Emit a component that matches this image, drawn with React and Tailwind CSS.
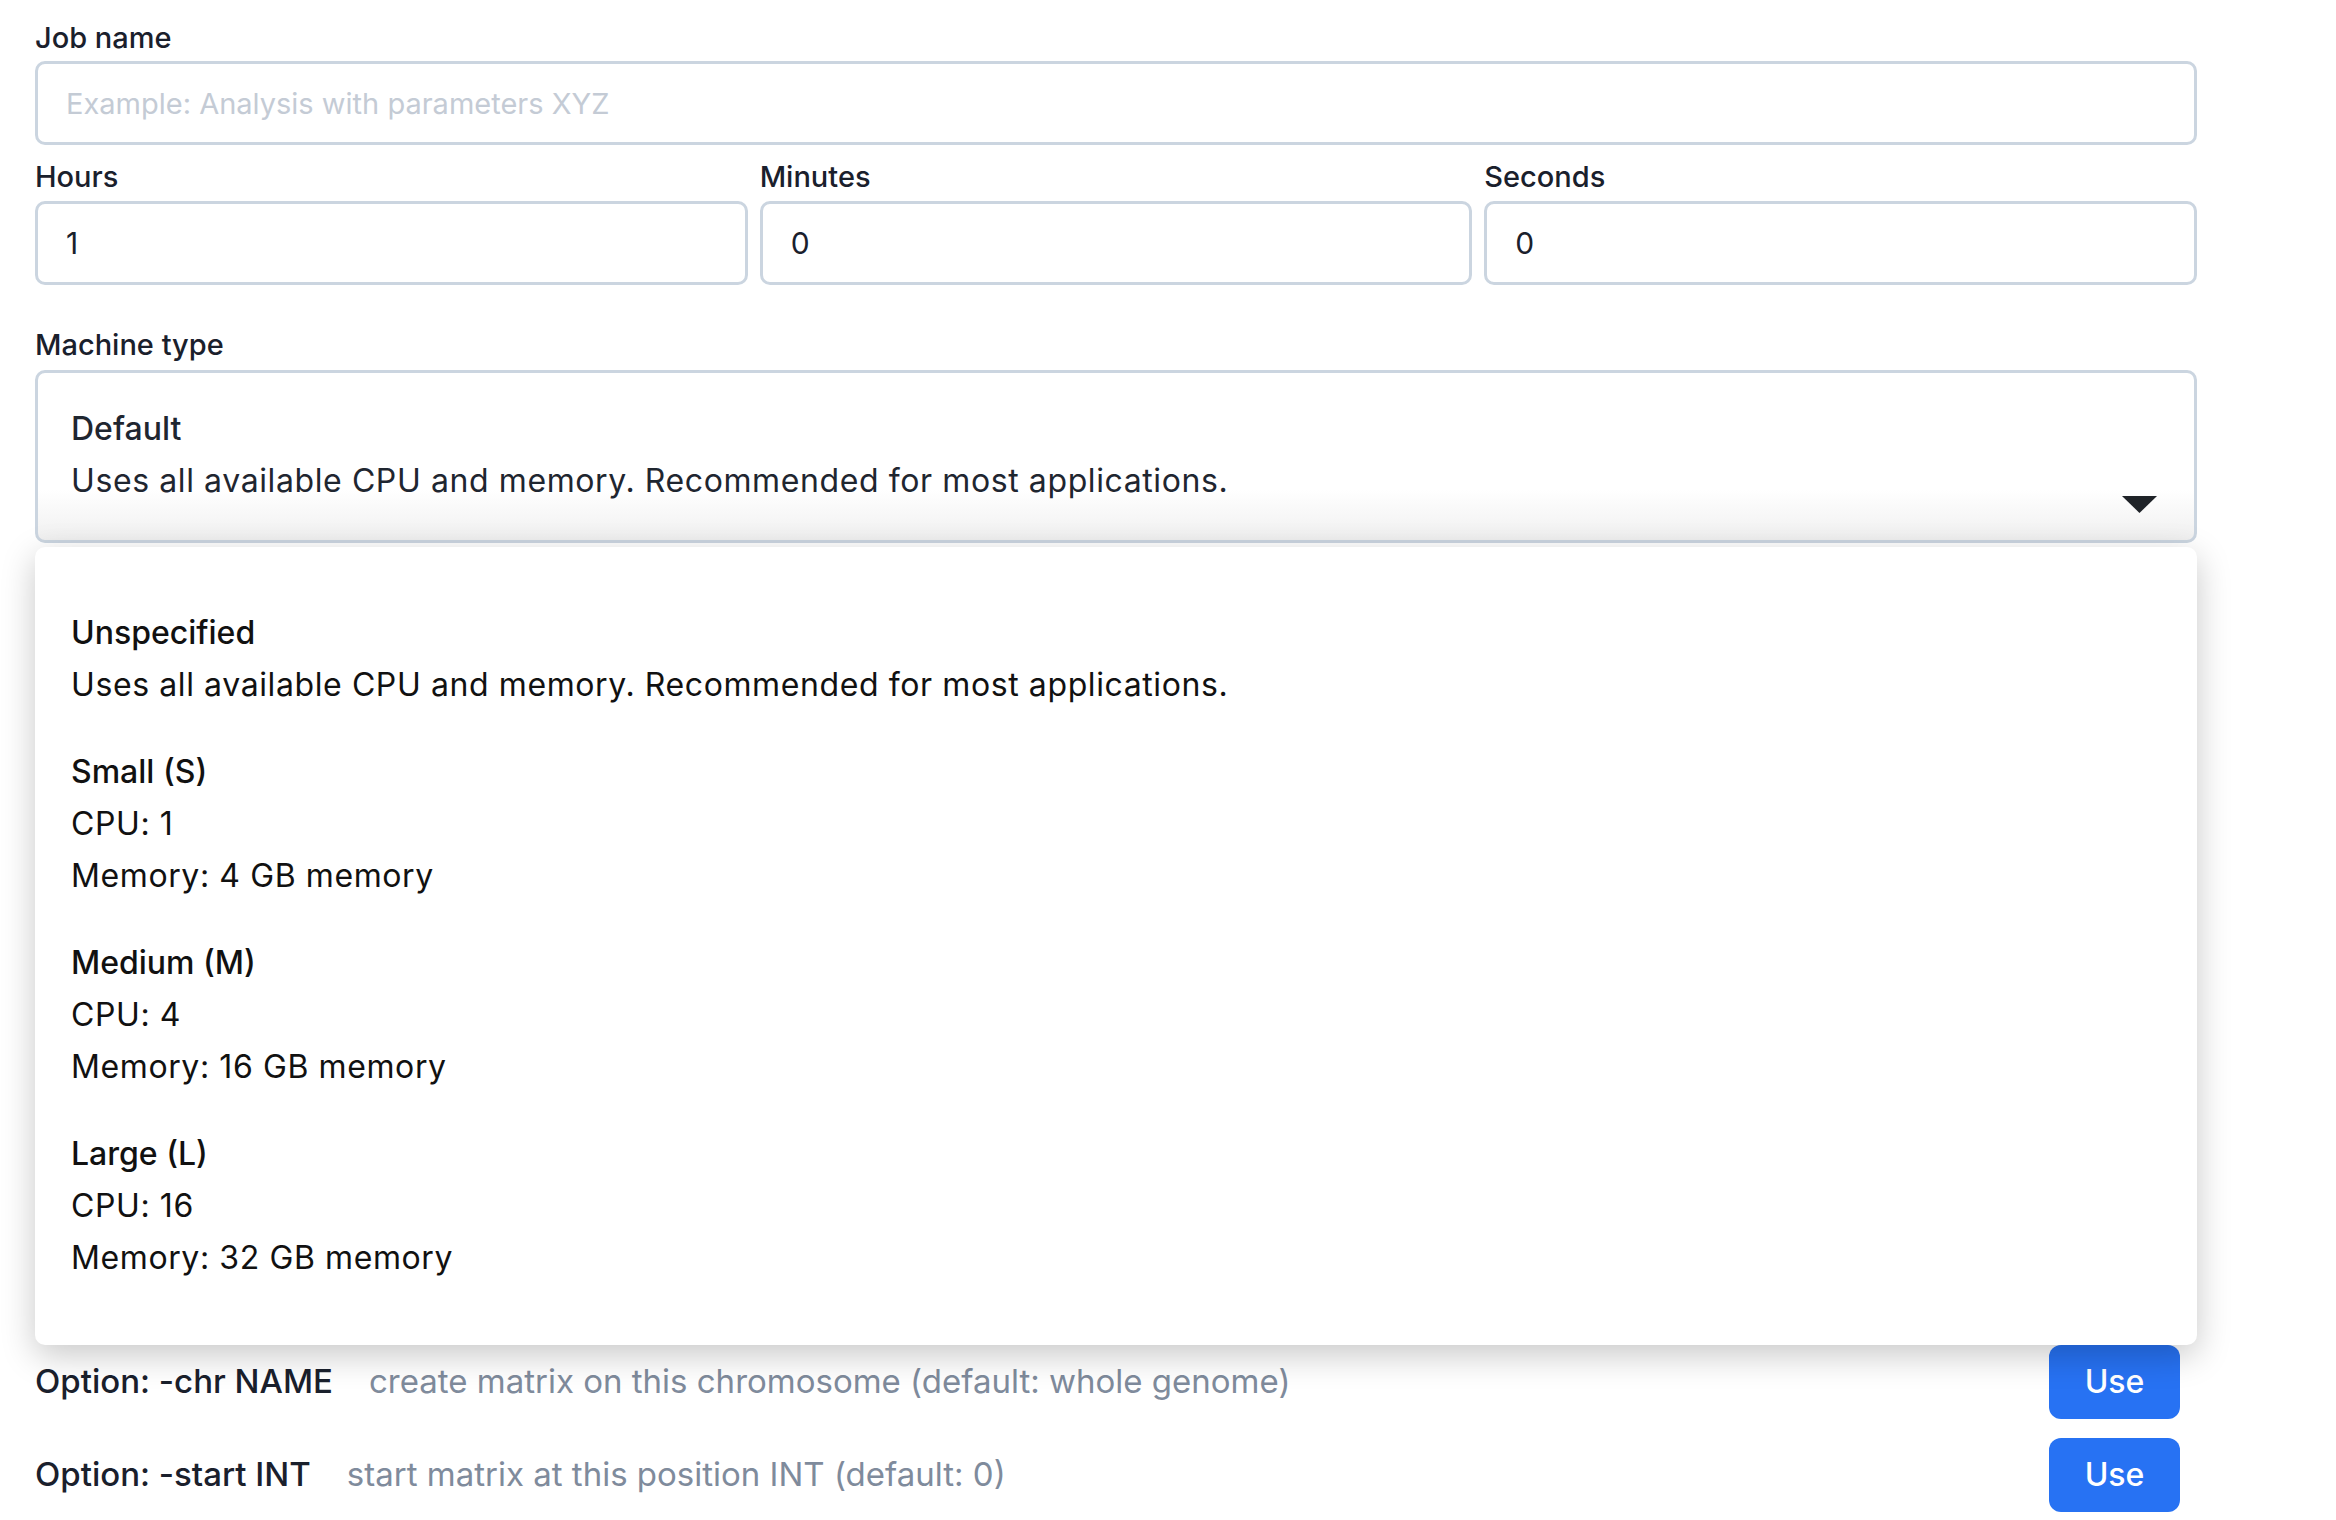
import { useState } from "react";

// Machine sizes shown in the open dropdown
const MACHINE_TYPES = [
    {
        name: "Unspecified",
        lines: ["Uses all available CPU and memory. Recommended for most applications."],
    },
    { name: "Small (S)", lines: ["CPU: 1", "Memory: 4 GB memory"] },
    { name: "Medium (M)", lines: ["CPU: 4", "Memory: 16 GB memory"] },
    { name: "Large (L)", lines: ["CPU: 16", "Memory: 32 GB memory"] },
];

const OPTIONS = [
    { flag: "Option: -chr NAME", help: "create matrix on this chromosome (default: whole genome)" },
    { flag: "Option: -start INT", help: "start matrix at this position INT (default: 0)" },
];

function Label({ children, className = "" }) {
    return (
        <label className={`block text-[29px] leading-[40px] font-medium text-[#1a202c] ${className}`}>
            {children}
        </label>
    );
}

function TextInput({ value, placeholder }) {
    return (
        <input
            defaultValue={value}
            placeholder={placeholder}
            className="w-full h-[84px] border-[3px] border-[#cbd5e0] rounded-[10px] pl-[28px] text-[30px] text-[#1a202c] placeholder:text-[29px] placeholder:text-[#c4cbd5] focus:outline-none"
        />
    );
}

export default function App() {
    const [open] = useState(true);

    return (
        <div className="min-h-screen bg-white px-[35px] pt-[18px] font-['Inter',sans-serif]" style={{ width: 2336 }}>
            <div className="w-[2162px]">
                <Label className="mb-[3px]">Job name</Label>
                <TextInput placeholder="Example: Analysis with parameters XYZ" />

                <div className="grid grid-cols-3 gap-[12px] mt-[12px]">
                    <div>
                        <Label className="mb-[4px]">Hours</Label>
                        <TextInput value="1" />
                    </div>
                    <div>
                        <Label className="mb-[4px]">Minutes</Label>
                        <TextInput value="0" />
                    </div>
                    <div>
                        <Label className="mb-[4px]">Seconds</Label>
                        <TextInput value="0" />
                    </div>
                </div>

                <Label className="mt-[40px] mb-[5px]">Machine type</Label>
                <div className="relative">
                    <div className="relative h-[173px] border-[3px] border-[#cbd5e0] rounded-[10px] bg-linear-to-b from-white from-70% to-[#f0f0f0] pl-[33px] pt-[30px] text-[32px] leading-[52px] text-[#1f2630]">
                        <div className="font-medium">Default</div>
                        <div className="tracking-[0.6px]">
                            Uses all available CPU and memory. Recommended for most applications.
                        </div>
                        <svg
                            className="absolute right-[37px] bottom-[27px]"
                            width="35"
                            height="17"
                            viewBox="0 0 35 17"
                        >
                            <path d="M0 0 H35 L17.5 17 Z" fill="#1f2328" />
                        </svg>
                    </div>

                    {open && (
                        <div className="absolute left-0 right-0 top-[177px] z-10 h-[798px] bg-white rounded-[10px] shadow-[0_10px_34px_rgba(0,0,0,0.22)] px-[36px] py-[60px] text-[32px] leading-[52px] text-[#111111] flex flex-col gap-[35px]">
                            {MACHINE_TYPES.map((type) => (
                                <div key={type.name}>
                                    <div className="font-medium">{type.name}</div>
                                    {type.lines.map((line) => (
                                        <div key={line} className="tracking-[0.6px]">{line}</div>
                                    ))}
                                </div>
                            ))}
                        </div>
                    )}
                </div>

                <div className="mt-[802px] flex flex-col gap-[19px] pr-[17px]">
                    {OPTIONS.map((opt) => (
                        <div key={opt.flag} className="flex items-center h-[74px]">
                            <span className="text-[33px] font-medium text-[#1a202c]">{opt.flag}</span>
                            <span className="ml-[36px] text-[33px] text-[#7f8b9c]">{opt.help}</span>
                            <button className="ml-auto w-[131px] h-[74px] rounded-[12px] bg-[#2772f3] text-white text-[32px] font-medium">
                                Use
                            </button>
                        </div>
                    ))}
                </div>
            </div>
        </div>
    );
}
